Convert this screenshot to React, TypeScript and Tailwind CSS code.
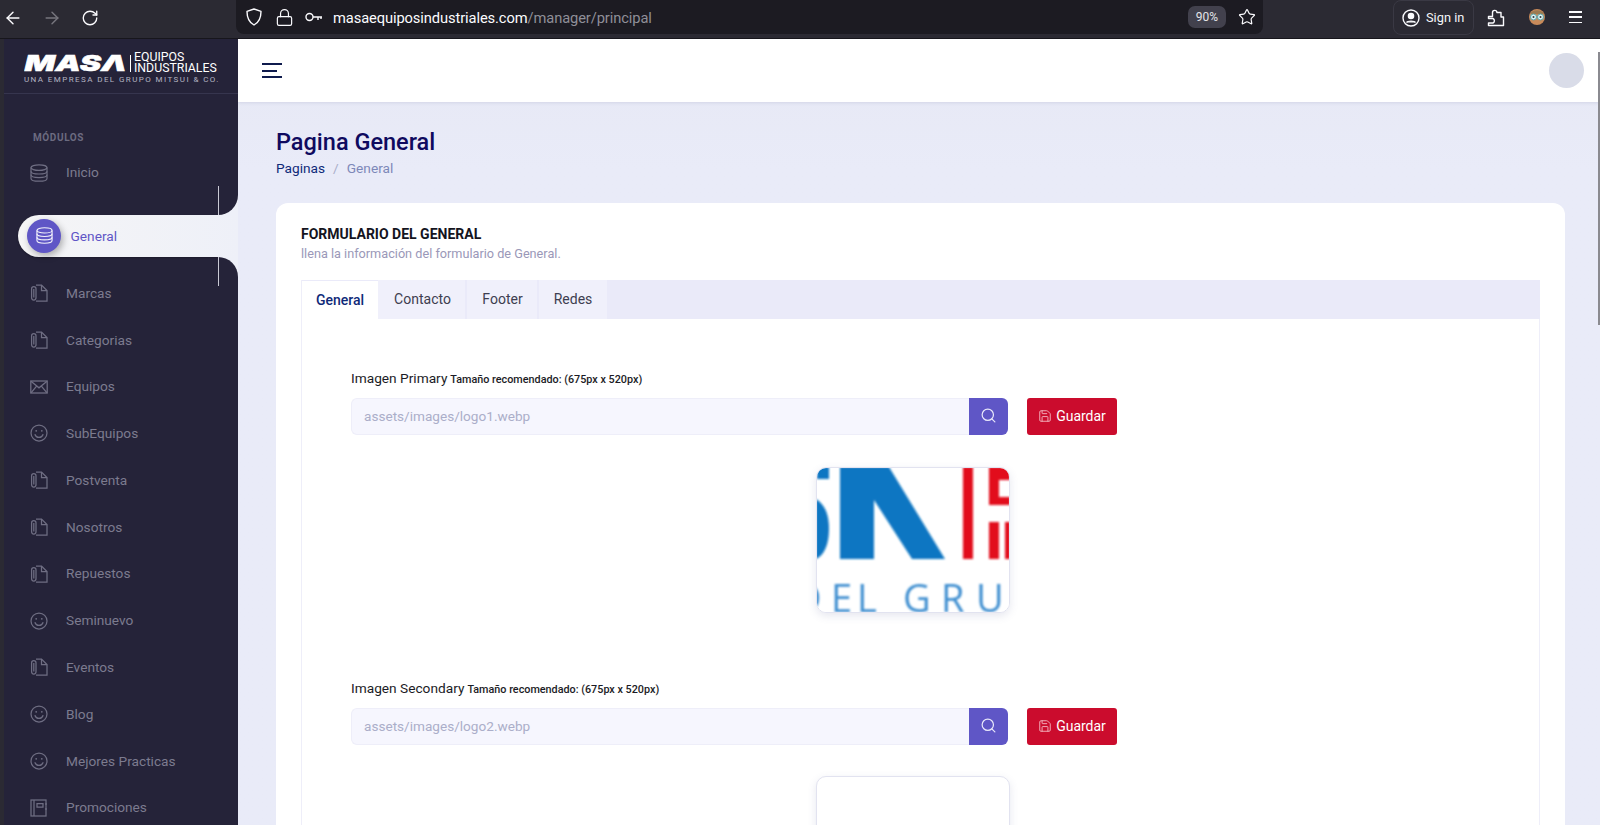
import React from "react";
import { ArrowLeft, ArrowRight, RotateCw, Lock, Star, Search, Save } from "lucide-react";

const Db = ({ c = "#6f6e83", s = 18 }: { c?: string; s?: number }) => (
  <svg width={s} height={s} viewBox="0 0 18 18" fill="none" stroke={c} strokeWidth="1.2">
    <ellipse cx="9" cy="3.6" rx="8" ry="2.8" />
    <path d="M1 3.6v10.8c0 1.6 3.6 2.8 8 2.8s8-1.200 8-2.800V3.600" />
    <path d="M1 7.200c0 1.600 3.600 2.800 8 2.800s8-1.200 8-2.800M1 10.800c0 1.600 3.600 2.800 8 2.800s8-1.200 8-2.800" />
  </svg>
);
const Doc = () => (
  <svg width="18" height="18" viewBox="0 0 18 18" fill="none" stroke="#6f6e83" strokeWidth="1.25">
    <path d="M6 1h5.500L17 6.500V17H6" />
    <path d="M11.500 1v5.500H17" />
    <rect x="1.600" y="2.500" width="4.400" height="13.500" rx="2.200" />
    <path d="M3.800 5v8.500" />
  </svg>
);
const Mail = () => (
  <svg width="18" height="18" viewBox="0 0 18 18" fill="none" stroke="#6f6e83" strokeWidth="1.3">
    <rect x="0.800" y="3" width="16.400" height="12" />
    <path d="M1 3.200l8 6.600 8-6.600M1 14.800l5.600-6.600M17 14.800l-5.600-6.600" />
  </svg>
);
const Smile = () => (
  <svg width="18" height="18" viewBox="0 0 18 18" fill="none" stroke="#6f6e83" strokeWidth="1.25">
    <circle cx="9" cy="9" r="8" />
    <path d="M4.800 10.200c.8 2.200 2.300 3.200 4.200 3.200s3.400-1 4.200-3.200" />
    <circle cx="6.200" cy="6.800" r="0.900" fill="#6f6e83" stroke="none" />
    <circle cx="11.800" cy="6.800" r="0.900" fill="#6f6e83" stroke="none" />
  </svg>
);
const Book = () => (
  <svg width="18" height="18" viewBox="0 0 18 18" fill="none" stroke="#6f6e83" strokeWidth="1.250">
    <rect x="1" y="1" width="15" height="16" />
    <path d="M4 1v16M7 4.500h6v3.500H7zM16 4v2M16 9v2" />
  </svg>
);

type Kind = "doc" | "mail" | "smile" | "book";
const icons: Record<Kind, React.ReactNode> = { doc: <Doc />, mail: <Mail />, smile: <Smile />, book: <Book /> };
const rest: [string, Kind][] = [
  ["Marcas", "doc"],
  ["Categorias", "doc"],
  ["Equipos", "mail"],
  ["SubEquipos", "smile"],
  ["Postventa", "doc"],
  ["Nosotros", "doc"],
  ["Repuestos", "doc"],
  ["Seminuevo", "smile"],
  ["Eventos", "doc"],
  ["Blog", "smile"],
  ["Mejores Practicas", "smile"],
  ["Promociones", "book"],
];

const Item = ({ label, icon }: { label: string; icon: React.ReactNode }) => (
  <div className="flex h-[46.8px] shrink-0 items-center pl-[26px]">
    <span className="flex w-[18px] shrink-0">{icon}</span>
    <span className="ml-[18px] text-[13.7px] text-[#7c7b8f]">{label}</span>
  </div>
);

const ImageField = ({ label, value, children }: { label: string; value: string; children: React.ReactNode }) => (
  <div>
    <div className="flex h-[20px] items-baseline gap-[3px] text-[#1b1b25]">
      <span className="text-[13.7px] leading-[20px]">{label}</span>
      <span className="text-[10.8px] font-medium">Tamaño recomendado: (675px x 520px)</span>
    </div>
    <div className="mt-[10px] flex h-[37px]">
      <div className="flex w-[618px] items-center rounded-l-[6px] border border-r-0 border-[#eeeef9] bg-[#f6f6fe] pl-[12px] text-[13.6px] text-[#abaec9]">
        {value}
      </div>
      <div className="flex w-[39px] items-center justify-center rounded-r-[6px] bg-[#5f56c6]">
        <Search size={17} color="#e9e8fa" strokeWidth={1.7} className="-mt-[2px]" />
      </div>
      <div className="ml-[19px] flex w-[90px] items-center justify-center gap-[4px] rounded-[3px] bg-[#cb0c2d] text-[14px] text-white">
        <Save size={14} color="#f3b5c0" strokeWidth={1.6} className="-mt-[2px]" />
        Guardar
      </div>
    </div>
    {children}
  </div>
);

const Logo1 = () => (
  <svg width="194" height="146" viewBox="0 0 194 146" className="-ml-px -mt-px">
    <defs>
      <filter id="b"><feGaussianBlur stdDeviation="0.8" /></filter>
    </defs>
    <rect width="194" height="146" fill="#fff" />
    <g filter="url(#b)">
      <path d="M1 0h12v12H1z" fill="#0d76c2" />
      <path d="M0 32c8 5 13 14 13 30 0 17-6 27-13 30z" fill="#0d76c2" />
      <path d="M24 0h49l56 92H96L58 33v59H24z" fill="#0d76c2" />
      <path d="M147 0h10v92h-10zM173 0h21v13h-11v17h11v8h-21zM173 55h10v37h-10zM189 55h5v37h-5z" fill="#e2101f" />
      <text x="-22 15 41 70 87 125 160 200 230" y="145" fontFamily="'Open Sans', sans-serif" fontSize="38" fill="#3f8fd0">DEL GRUPO</text>
    </g>
  </svg>
);

export default function App() {
  return (
    <div className="flex h-[825px] w-[1600px] flex-col overflow-hidden bg-[#2b2a33] font-['Roboto',sans-serif]">
      {/* Browser chrome */}
      <div className="flex h-[39px] shrink-0 border-b border-[#17161c] bg-[#2b2a33]">
        <div className="flex h-[36px] w-[236px] items-center pl-[3px]">
          <ArrowLeft size={20} color="#fbfbfe" strokeWidth={1.7} />
          <ArrowRight size={20} color="#77767e" strokeWidth={1.7} className="ml-[19px]" />
          <RotateCw size={18} color="#fbfbfe" strokeWidth={1.8} className="ml-[19px]" />
        </div>
        <div className="flex h-[34px] w-[1027px] items-center rounded-b-[8px] bg-[#1c1b22] pl-[10px]">
          <svg width="16" height="18" viewBox="0 0 16 18" fill="none" stroke="#fbfbfe" strokeWidth="1.4">
            <path d="M8 1l7 2.400c0 6-1.400 10.600-7 13.600C2.400 14 1 9.400 1 3.400z" strokeLinejoin="round" />
          </svg>
          <Lock size={19} color="#fbfbfe" strokeWidth={1.5} className="ml-[13px]" />
          <svg width="18" height="10" viewBox="0 0 18 10" fill="none" stroke="#fbfbfe" strokeWidth="1.4" className="ml-[11px]">
            <circle cx="4.500" cy="5" r="3.500" />
            <path d="M8 5h9M13 5v3M16 5v2" />
          </svg>
          <span className="ml-[10px] mt-[3px] whitespace-nowrap text-[14.7px] tracking-[-0.1px] text-[#fbfbfe]">
            masaequiposindustriales.com<span className="text-[#8f8f98]">/manager/principal</span>
          </span>
          <div className="ml-auto flex h-[22px] w-[38px] items-center justify-center rounded-[7px] bg-[#42414d] text-[12px] text-[#e4e4e8]">
            90%
          </div>
          <Star size={18} color="#fbfbfe" strokeWidth={1.6} className="ml-[12px] mr-[7px]" />
        </div>
        <div className="ml-[130px] flex h-[35px] w-[81px] items-center rounded-[8px] border border-[#3a3944] pl-[8px]">
          <svg width="18" height="18" viewBox="0 0 18 18" fill="none" stroke="#fbfbfe" strokeWidth="1.4">
            <circle cx="9" cy="9" r="8" />
            <circle cx="9" cy="7" r="2.600" fill="#fbfbfe" />
            <path d="M4.500 13.500c1-1.800 8-1.800 9 0" fill="#fbfbfe" />
          </svg>
          <span className="ml-[6px] text-[12.8px] text-[#f4f4f8]">Sign in</span>
        </div>
        <svg width="18" height="19" viewBox="0 0 18 19" fill="none" stroke="#fbfbfe" strokeWidth="1.4" className="ml-[13px] mt-[8px]">
          <path d="M1.500 8.500h4V4.700a2.200 2.200 0 0 1 4.400-.2H14v4.500h2.500V17.500H1.500v-2.500H6a2.500 2.500 0 0 0 0-4.500H1.500z" strokeLinejoin="round" />
        </svg>
        <svg width="18" height="18" viewBox="0 0 18 18" className="ml-[23px] mt-[8px]">
          <circle cx="9" cy="9" r="8" fill="#c88a5a" />
          <path d="M2 6c2-5 12-5 14 0z" fill="#9c7a50" />
          <circle cx="5.500" cy="9" r="3" fill="#dff2f2" stroke="#5ba5a8" />
          <circle cx="12.500" cy="9" r="3" fill="#dff2f2" stroke="#5ba5a8" />
          <circle cx="5.500" cy="9" r="1" fill="#2f3a40" />
          <circle cx="12.500" cy="9" r="1" fill="#2f3a40" />
        </svg>
        <div className="ml-[23px] mt-[11px] flex h-[12px] w-[13px] flex-col justify-between">
          <div className="h-[1.5px] bg-[#fbfbfe]" />
          <div className="h-[1.5px] bg-[#fbfbfe]" />
          <div className="h-[1.5px] bg-[#fbfbfe]" />
        </div>
      </div>

      <div className="flex min-h-0 flex-1">
        {/* Sidebar */}
        <div className="ml-[4px] flex w-[234px] shrink-0 flex-col bg-[#252339]">
          <div className="h-[55px] shrink-0 border-b border-[#36354e] pl-[20px] pt-[13px]">
            <div className="flex h-[22px] items-center">
              <svg width="104" height="22" viewBox="0 0 104 22">
                <text x="0.500" y="19" textLength="102" lengthAdjust="spacingAndGlyphs" fontFamily="Inter, sans-serif" fontWeight="900" fontStyle="italic" fontSize="22" fill="#fff" stroke="#fff" strokeWidth="0.5">MASΛ</text>
              </svg>
              <div className="ml-[2px] h-[17px] w-px bg-white" />
              <div className="ml-[3px] flex flex-col whitespace-nowrap text-[12.3px] leading-[11px] text-white">
                <span>EQUIPOS</span>
                <span>INDUSTRIALES</span>
              </div>
            </div>
            <div className="mt-[1px] whitespace-nowrap text-[8px] leading-[10px] tracking-[1.42px] text-[#b4b4c2]">
              UNA EMPRESA DEL GRUPO MITSUI &amp; CO.
            </div>
          </div>
          <div className="pl-[29px] pt-[36px] text-[10px] font-bold leading-[16px] tracking-[0.6px] text-[#6c6b80]">MÓDULOS</div>
          <div className="mt-[3.2px]">
            <Item label="Inicio" icon={<Db />} />
          </div>
          <div className="relative ml-[14px] mt-[19px] flex h-[42px] shrink-0 items-center rounded-l-[21px] bg-gradient-to-r from-[#f5f5f6] to-[#eef0f8] pl-[9px] shadow-[0_1px_2px_rgba(0,0,0,0.25)]">
            <div className="flex h-[34px] w-[34px] items-center justify-center rounded-full bg-[#5f56c6] shadow-[2px_3px_7px_rgba(0,0,0,0.3)]">
              <Db c="#f2f2fb" s={17} />
            </div>
            <span className="ml-[9.5px] text-[13.7px] text-[#5f56c6]">General</span>
            <div className="absolute -top-[20px] right-0 h-[20px] w-[20px] bg-[#eef0f8]">
              <div className="h-full w-full rounded-br-[20px] bg-[#252339]" />
            </div>
            <div className="absolute -bottom-[20px] right-0 h-[20px] w-[20px] bg-[#eef0f8]">
              <div className="h-full w-full rounded-tr-[20px] bg-[#252339]" />
            </div>
            <div className="absolute -top-[29px] right-[19px] h-[29px] w-px bg-[#c9c9d4]" />
            <div className="absolute -bottom-[29px] right-[19px] h-[29px] w-px bg-[#c9c9d4]" />
          </div>
          <div className="relative mt-[12.6px]">
            {rest.map(([label, kind]) => (
              <Item key={label} label={label} icon={icons[kind]} />
            ))}
          </div>
        </div>

        {/* Main */}
        <div className="relative flex min-w-0 flex-1 flex-col overflow-hidden bg-gradient-to-b from-[#e6e8f4] from-[0px] to-[#e9ebf8] to-[130px]">
          <div className="flex h-[63px] shrink-0 items-center justify-between bg-white pl-[24px] pr-[16px] shadow-[0_1px_3px_rgba(90,95,150,0.15)]">
            <div className="flex h-[15px] w-[20px] flex-col justify-between">
              <div className="h-[2px] w-[20px] bg-[#0f1b4d]" />
              <div className="h-[2px] w-[15px] bg-[#0f1b4d]" />
              <div className="h-[2px] w-[20px] bg-[#0f1b4d]" />
            </div>
            <div className="h-[35px] w-[35px] rounded-full bg-[#d9dce8]" />
          </div>
          <div className="pl-[38px] pr-[35px] pt-[24px]">
            <div className="text-[23.5px] font-medium leading-[32px] text-[#0f0a5f]">Pagina General</div>
            <div className="flex h-[20px] items-center text-[13.7px]">
              <span className="text-[#0f2a78]">Paginas</span>
              <span className="mx-[8px] text-[#a9aec9]">/</span>
              <span className="text-[#7d88b8]">General</span>
            </div>
            <div className="mt-[25px] h-[700px] rounded-t-[12px] bg-white px-[25px] pt-[21px]">
              <div className="text-[14px] font-bold leading-[20px] text-[#14141e]">FORMULARIO DEL GENERAL</div>
              <div className="text-[12.7px] leading-[20px] text-[#9a98b8]">llena la información del formulario de General.</div>
              <div className="mt-[16px] flex h-[39px] gap-[2px] border-l border-[#eeeef9] bg-[#eaeaf9] pr-px">
                <div className="flex w-[76px] items-center justify-center border-t border-[#eaeaf9] bg-white text-[14px] font-medium text-[#0f2a78]">General</div>
                <div className="-ml-[2px] flex w-[87px] items-center justify-center bg-[#f0f0fb] pl-[2px] text-[14px] text-[#3e3e50]">Contacto</div>
                <div className="flex w-[70px] items-center justify-center bg-[#f0f0fb] pl-px text-[14px] text-[#3e3e50]">Footer</div>
                <div className="flex w-[68px] items-center justify-center bg-[#f0f0fb] text-[14px] text-[#3e3e50]">Redes</div>
              </div>
              <div className="h-[600px] border-x border-[#eeeef9] pl-[49px] pt-[49px]">
                <ImageField label="Imagen Primary" value="assets/images/logo1.webp">
                  <div className="ml-[465px] mt-[32px] h-[146px] w-[194px] overflow-hidden rounded-[10px] border border-[#e2e3f0] shadow-[0_3px_8px_rgba(90,95,150,0.15)]">
                    <Logo1 />
                  </div>
                </ImageField>
                <div className="mt-[65px]">
                  <ImageField label="Imagen Secondary" value="assets/images/logo2.webp">
                    <div className="ml-[465px] mt-[31px] h-[145px] w-[194px] rounded-[10px] border border-[#e2e3f0] bg-white shadow-[0_3px_8px_rgba(90,95,150,0.15)]" />
                  </ImageField>
                </div>
              </div>
            </div>
          </div>
          {/* Scrollbar thumb */}
          <div className="absolute right-0 top-[13px] h-[273px] w-[2px] bg-[#8a8a90]" />
        </div>
      </div>
    </div>
  );
}
